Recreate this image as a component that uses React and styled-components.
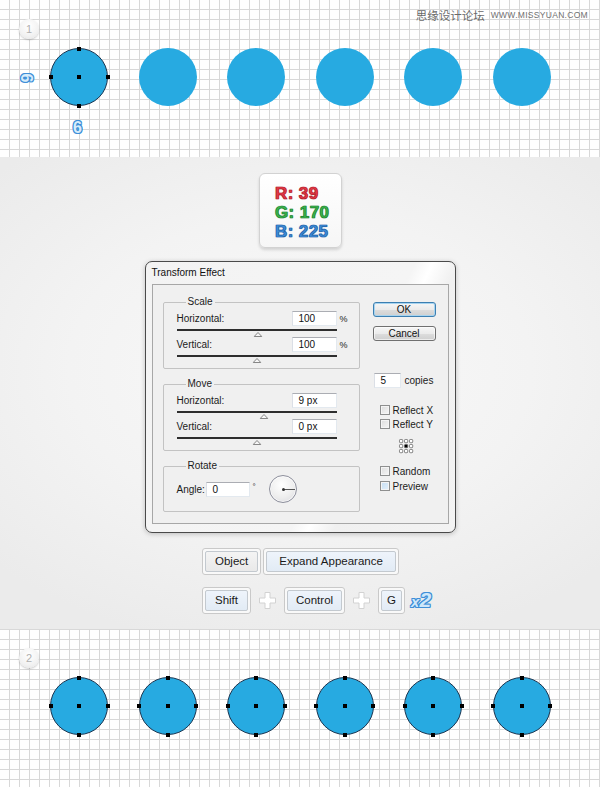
import React from "react";
import styled, { createGlobalStyle } from "styled-components";

const GlobalStyle = createGlobalStyle`
  html, body { margin: 0; padding: 0; background: #fff; }
  body { font-family: "Liberation Sans", Arial, sans-serif; }
`;

const Page = styled.div`
  width: 600px;
  height: 787px;
  overflow: hidden;
  display: flex;
  flex-direction: column;
`;

const GridSection = styled.section`
  position: relative;
  height: ${(p) => p.$h}px;
  box-sizing: border-box;
  padding: 19px 0 0 19px;
  background-color: #fff;
  background-image: linear-gradient(to right, #d8d8d8 1px, transparent 1px),
    linear-gradient(to bottom, #d8d8d8 1px, transparent 1px);
  background-size: 10px 10px;
  background-position: 9px ${(p) => p.$gy}px;
`;

const Watermark = styled.div`
  position: absolute;
  top: 8px;
  right: 12px;
  display: flex;
  align-items: center;
  gap: 6px;
  color: #6a6a6a;
  font-family: "Noto Sans CJK SC", sans-serif;
  font-size: 11.5px;
  line-height: 14px;
  span {
    font-family: "Liberation Sans", Arial, sans-serif;
    font-size: 8.5px;
    letter-spacing: 0.3px;
    color: #707070;
  }
`;

const StepBadge = styled.div`
  width: 20px;
  height: 20px;
  border-radius: 50%;
  background: radial-gradient(circle at 50% 35%, #ffffff 0%, #f2f2f2 60%, #e2e2e2 100%);
  box-shadow: 0 1px 2px rgba(0, 0, 0, 0.22);
  color: #b0b0b0;
  font-size: 11px;
  line-height: 20px;
  text-align: center;
`;

const CircleRow = styled.div`
  display: flex;
  gap: 30.5px;
  margin: 9px 0 0 31px;
`;

const Circle = styled.div`
  position: relative;
  width: 58px;
  height: 58px;
  box-sizing: border-box;
  border-radius: 50%;
  background: #27aae1;
  border: ${(p) => (p.$path ? "1px solid #1c3550" : "none")};
`;

const Anchor = styled.i`
  position: absolute;
  width: 4px;
  height: 4px;
  background: #000;
  left: ${(p) => p.$x};
  top: ${(p) => p.$y};
  transform: translate(-50%, -50%);
`;

const Outlined = styled.span`
  font-family: "Liberation Sans", Arial, sans-serif;
  font-weight: bold;
  color: #d8ecfb;
  text-shadow: 1px 0 #3f8fd8, -1px 0 #3f8fd8, 0 1px #3f8fd8, 0 -1px #3f8fd8,
    1px 1px #3f8fd8, -1px -1px #3f8fd8, 1px -1px #3f8fd8, -1px 1px #3f8fd8;
`;

const SideLabel = styled(Outlined)`
  position: absolute;
  left: 22px;
  top: 70px;
  font-size: 16px;
  line-height: 16px;
  transform: rotate(90deg);
`;

const BottomLabel = styled(Outlined)`
  position: absolute;
  left: 73px;
  top: 120px;
  font-size: 16px;
  line-height: 16px;
`;

const Middle = styled.section`
  height: 472px;
  box-sizing: border-box;
  padding-top: 16px;
  background: radial-gradient(ellipse 70% 60% at 50% 45%, #f9f9f9 0%, #f3f3f3 55%, #ebebeb 100%);
  display: flex;
  flex-direction: column;
  align-items: center;
`;

const ColorCard = styled.div`
  width: 83px;
  height: 75px;
  box-sizing: border-box;
  margin-left: 1px;
  border: 1px solid #d2d2d2;
  border-radius: 6px;
  background: linear-gradient(#ffffff, #f6f6f6);
  box-shadow: 0 2px 3px rgba(0, 0, 0, 0.14);
  padding: 10px 0 0 15px;
  display: flex;
  flex-direction: column;
`;

const ColorLine = styled.div`
  font-family: "Liberation Sans", Arial, sans-serif;
  font-weight: bold;
  font-size: 17px;
  line-height: 19px;
  color: ${(p) => p.$fill};
  -webkit-text-stroke: 0.7px ${(p) => p.$edge};
  text-shadow: 0 0 1px ${(p) => p.$edge};
  letter-spacing: 0.4px;
`;

const Dialog = styled.div`
  width: 311px;
  height: 272px;
  box-sizing: border-box;
  margin-top: 13px;
  border: 1px solid #4a4a4a;
  border-radius: 7px;
  background: linear-gradient(115deg, #f3f3f3 0%, #f5f5f5 62%, #ffffff 66%, #f0f0f0 72%, #f3f3f3 100%);
  box-shadow: 0 1px 5px rgba(0, 0, 0, 0.22);
  padding: 0 6px 8px 6px;
  display: flex;
  flex-direction: column;
  font-size: 10px;
  color: #1b1b1b;
`;

const DialogTitle = styled.div`
  height: 22px;
  line-height: 22px;
  font-size: 10px;
  color: #111;
`;

const Panel = styled.div`
  flex: 1;
  border: 1px solid #a7a7a7;
  background: #f0f0f0;
  box-sizing: border-box;
  padding: 11px 0 0 10px;
  display: grid;
  grid-template-columns: 197px 64px;
  column-gap: 13px;
  align-items: start;
`;

const LeftCol = styled.div`
  display: flex;
  flex-direction: column;
  gap: 9px;
`;

const Group = styled.fieldset`
  margin: 0;
  min-width: 0;
  width: 197px;
  box-sizing: border-box;
  border: 1px solid #c3c3c3;
  border-radius: 2px;
  padding: 3px 0 ${(p) => p.$pb}px 13px;
`;

const Legend = styled.legend`
  font-size: 10px;
  line-height: 12px;
  padding: 0 2px;
  margin-left: 9px;
  color: #1b1b1b;
`;

const FieldRow = styled.div`
  display: grid;
  grid-template-columns: 115px 45px auto;
  align-items: center;
  height: 15px;
  margin-top: ${(p) => p.$mt || 0}px;
`;

const Input = styled.div`
  width: ${(p) => p.$w || 45}px;
  height: 15px;
  box-sizing: border-box;
  background: #fff;
  border: 1px solid #e3e9ef;
  border-top-color: #abadb3;
  border-left-color: #dbdfe6;
  padding-left: 6px;
  font-size: 10px;
  line-height: 13px;
  color: #111;
`;

const Unit = styled.span`
  margin-left: 3px;
  font-size: 9px;
`;

const Slider = styled.div`
  position: relative;
  width: 160px;
  height: 7px;
  margin-top: 3px;
  border-top: 2px solid #2e2e2e;
  box-sizing: border-box;
`;

const Thumb = styled.svg`
  position: absolute;
  top: 1px;
  left: ${(p) => p.$pos}px;
  transform: translateX(-50%);
`;

const AngleRow = styled.div`
  display: flex;
  align-items: center;
  height: 28px;
`;

const AngleLabel = styled.span`
  width: 29px;
`;

const Degree = styled.span`
  margin: -6px 0 0 3px;
  font-size: 8px;
  width: 16px;
`;

const Dial = styled.div`
  position: relative;
  width: 28px;
  height: 28px;
  box-sizing: border-box;
  border-radius: 50%;
  border: 1px solid #8d8f9c;
  background: radial-gradient(circle at 45% 35%, #ffffff 0%, #eeeeee 55%, #d6d6dc 100%);
  box-shadow: inset 0 0 0 1px rgba(255, 255, 255, 0.7);
`;

const DialHand = styled.i`
  position: absolute;
  left: 13px;
  top: 13px;
  width: 12px;
  height: 1px;
  background: #555;
  &::before {
    content: "";
    position: absolute;
    left: -1px;
    top: -1px;
    width: 3px;
    height: 3px;
    background: #333;
    border-radius: 50%;
  }
`;

const RightCol = styled.div`
  display: flex;
  flex-direction: column;
  margin-top: 6px;
`;

const Button = styled.div`
  width: 63px;
  height: 15px;
  box-sizing: border-box;
  margin-top: ${(p) => p.$mt || 0}px;
  border: 1px solid ${(p) => (p.$primary ? "#3c7fb1" : "#707070")};
  border-radius: 3px;
  background: linear-gradient(#f6f6f6 0%, #ebebeb 50%, #dddddd 51%, #cfcfcf 100%);
  box-shadow: ${(p) => (p.$primary ? "0 0 0 1px #a7d4f0 inset" : "inset 0 0 0 1px rgba(255,255,255,0.6)")};
  text-align: center;
  font-size: 10px;
  line-height: 13px;
  color: #111;
`;

const CopiesRow = styled.div`
  display: flex;
  align-items: center;
  gap: 4px;
  margin-top: ${(p) => p.$mt}px;
  margin-left: 1px;
  font-size: 10px;
`;

const CheckRow = styled.div`
  display: flex;
  align-items: center;
  gap: 3px;
  height: 10px;
  margin-top: ${(p) => p.$mt}px;
  margin-left: 7px;
  font-size: 10px;
  color: #1b1b1b;
`;

const Box = styled.span`
  width: 10px;
  height: 10px;
  box-sizing: border-box;
  border: 1px solid #8e8f8f;
  background: ${(p) =>
    p.$blue
      ? "linear-gradient(135deg, #c6def3, #e4f0fa)"
      : "linear-gradient(135deg, #dcdcdc, #f6f6f6)"};
  box-shadow: inset 0 0 0 1px #f4f4f4;
`;

const RefPoint = styled.svg`
  margin: 9px 0 0 25px;
`;

const KeysBlock = styled.div`
  align-self: flex-start;
  margin: 15px 0 0 202px;
  display: flex;
  flex-direction: column;
  gap: 12px;
`;

const KeyRow = styled.div`
  display: flex;
  align-items: center;
  gap: ${(p) => p.$gap}px;
`;

const Key = styled.div`
  height: 27px;
  box-sizing: border-box;
  padding: 2px;
  border: 1px solid #c9c9c9;
  border-radius: 3px;
  background: #f9f9f9;
  display: flex;
`;

const KeyFace = styled.div`
  flex: 1;
  box-sizing: border-box;
  padding: 0 ${(p) => p.$px}px;
  border: 1px solid #c3c9cf;
  border-radius: 2px;
  background: ${(p) =>
    p.$tone === "blue"
      ? "linear-gradient(#eef4fb, #e2ebf5)"
      : "linear-gradient(#f4f4f4, #e9e9e9)"};
  font-family: "Liberation Sans", Arial, sans-serif;
  font-size: 11.5px;
  line-height: 19px;
  color: #1a1a1a;
  text-align: center;
  white-space: nowrap;
`;

const Plus = styled.svg`
  flex: none;
`;

const Times = styled(Outlined)`
  align-self: flex-end;
  margin: 0 0 1px -2px;
  font-style: italic;
  font-size: 21px;
  line-height: 22px;
  color: #cfe7fa;
  small {
    font-size: 15px;
  }
`;

function Anchors() {
  return (
    <>
      <Anchor $x="50%" $y="-0.5px" />
      <Anchor $x="50%" $y="calc(100% + 0.5px)" />
      <Anchor $x="-0.5px" $y="50%" />
      <Anchor $x="calc(100% + 0.5px)" $y="50%" />
      <Anchor $x="50%" $y="50%" />
    </>
  );
}

function TriangleThumb({ pos }) {
  return (
    <Thumb $pos={pos} width="9" height="5" viewBox="0 0 9 5">
      <path d="M4.5 0.5 L8.3 4.5 L0.7 4.5 Z" fill="#f6f6f6" stroke="#7a7a7a" strokeWidth="0.9" />
    </Thumb>
  );
}

function PlusIcon() {
  return (
    <Plus width="17" height="17" viewBox="0 0 17 17">
      <path
        d="M6 0.5 H11 V6 H16.5 V11 H11 V16.5 H6 V11 H0.5 V6 H6 Z"
        fill="#ffffff"
        stroke="#d2d2d2"
        strokeWidth="1"
      />
    </Plus>
  );
}

function Check({ label, mt, blue }) {
  return (
    <CheckRow $mt={mt}>
      <Box $blue={blue} />
      {label}
    </CheckRow>
  );
}

export default function App() {
  const six = [0, 1, 2, 3, 4, 5];
  return (
    <Page>
      <GlobalStyle />
      <GridSection $h={157} $gy={9}>
        <Watermark>
          思缘设计论坛<span>WWW.MISSYUAN.COM</span>
        </Watermark>
        <StepBadge>1</StepBadge>
        <CircleRow>
          {six.map((i) => (
            <Circle key={i} $path={i === 0}>
              {i === 0 && <Anchors />}
            </Circle>
          ))}
        </CircleRow>
        <SideLabel>6</SideLabel>
        <BottomLabel>6</BottomLabel>
      </GridSection>

      <Middle>
        <ColorCard>
          <ColorLine $fill="#e63946" $edge="#b01e2c">R: 39</ColorLine>
          <ColorLine $fill="#3cb44c" $edge="#1f8533">G: 170</ColorLine>
          <ColorLine $fill="#3e8ed8" $edge="#1f60aa">B: 225</ColorLine>
        </ColorCard>

        <Dialog>
          <DialogTitle>Transform Effect</DialogTitle>
          <Panel>
            <LeftCol>
              <Group $pb={6}>
                <Legend>Scale</Legend>
                <FieldRow>
                  <span>Horizontal:</span>
                  <Input>100</Input>
                  <Unit>%</Unit>
                </FieldRow>
                <Slider>
                  <TriangleThumb pos={81} />
                </Slider>
                <FieldRow $mt={1}>
                  <span>Vertical:</span>
                  <Input>100</Input>
                  <Unit>%</Unit>
                </FieldRow>
                <Slider>
                  <TriangleThumb pos={80} />
                </Slider>
              </Group>

              <Group $pb={6}>
                <Legend>Move</Legend>
                <FieldRow>
                  <span>Horizontal:</span>
                  <Input>9 px</Input>
                </FieldRow>
                <Slider>
                  <TriangleThumb pos={87} />
                </Slider>
                <FieldRow $mt={1}>
                  <span>Vertical:</span>
                  <Input>0 px</Input>
                </FieldRow>
                <Slider>
                  <TriangleThumb pos={80} />
                </Slider>
              </Group>

              <Group $pb={8}>
                <Legend>Rotate</Legend>
                <AngleRow>
                  <AngleLabel>Angle:</AngleLabel>
                  <Input $w={44}>0</Input>
                  <Degree>°</Degree>
                  <Dial>
                    <DialHand />
                  </Dial>
                </AngleRow>
              </Group>
            </LeftCol>

            <RightCol>
              <Button $primary>OK</Button>
              <Button $mt={9}>Cancel</Button>
              <CopiesRow $mt={32}>
                <Input $w={27}>5</Input>
                copies
              </CopiesRow>
              <Check label="Reflect X" mt={17} />
              <Check label="Reflect Y" mt={4} />
              <RefPoint width="16" height="16" viewBox="0 0 16 16">
                {[1.5, 6.5, 11.5].map((y) =>
                  [1.5, 6.5, 11.5].map((x) => (
                    <rect
                      key={`${x}-${y}`}
                      x={x}
                      y={y}
                      width="3.2"
                      height="3.2"
                      rx="0.8"
                      fill={x === 6.5 && y === 6.5 ? "#000" : "#fff"}
                      stroke="#666"
                      strokeWidth="0.8"
                    />
                  ))
                )}
              </RefPoint>
              <Check label="Random" mt={12} />
              <Check label="Preview" mt={5} blue />
            </RightCol>
          </Panel>
        </Dialog>

        <KeysBlock>
          <KeyRow $gap={2}>
            <Key>
              <KeyFace $px={9}>Object</KeyFace>
            </Key>
            <Key>
              <KeyFace $px={12} $tone="blue">Expand Appearance</KeyFace>
            </Key>
          </KeyRow>
          <KeyRow $gap={8}>
            <Key>
              <KeyFace $px={9} $tone="blue">Shift</KeyFace>
            </Key>
            <PlusIcon />
            <Key>
              <KeyFace $px={8} $tone="blue">Control</KeyFace>
            </Key>
            <PlusIcon />
            <Key>
              <KeyFace $px={5} $tone="blue">G</KeyFace>
            </Key>
            <Times>
              <small>x</small>2
            </Times>
          </KeyRow>
        </KeysBlock>
      </Middle>

      <GridSection $h={158} $gy={0}>
        <StepBadge>2</StepBadge>
        <CircleRow>
          {six.map((i) => (
            <Circle key={i} $path>
              <Anchors />
            </Circle>
          ))}
        </CircleRow>
      </GridSection>
    </Page>
  );
}
